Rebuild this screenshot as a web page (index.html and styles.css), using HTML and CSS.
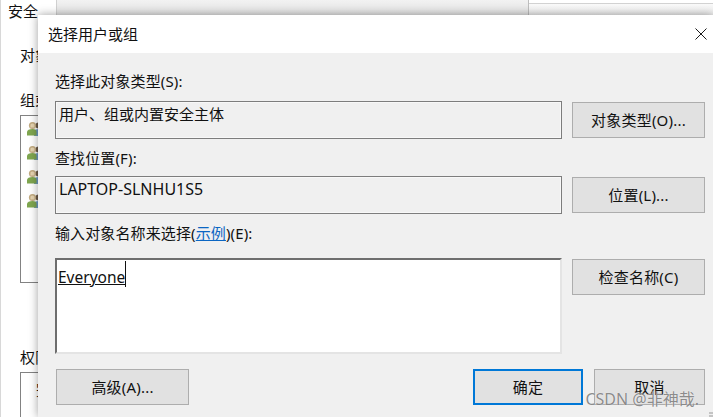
FILE: index.html
```html
<!DOCTYPE html>
<html lang="zh-CN">
<head>
    <meta charset="UTF-8">
    <meta name="viewport" content="width=device-width, initial-scale=1.0">
    <title>选择用户或组</title>
    <link rel="stylesheet" href="styles.css">
</head>
<body>
    <svg class="defs" width="0" height="0">
        <symbol id="users" viewBox="0 0 16 16">
            <circle cx="11.500" cy="4.500" r="3" fill="#6b5a48"/>
            <path d="M7 15v-4c0-2 2-3 4.500-3s4 1 4 3v4z" fill="#6f9ac6"/>
            <circle cx="5.500" cy="4.500" r="3.600" fill="#c2ab80"/>
            <path d="M3.500 3.500c1-1.500 3-1.500 4 0v3h-4z" fill="#e6d4b0"/>
            <path d="M0 14.500v-3.500c0-2 2.500-3 5.500-3s4 1 4 3v3.500z" fill="#7fa64f"/>
        </symbol>
    </svg>

    <!-- window behind the dialog -->
    <div class="back-window">
        <div class="back-tabs">
            <div class="back-tab">安全</div>
            <div class="back-tab-rest"></div>
            <div class="back-tab-end"></div>
        </div>
        <div class="back-body">
            <p class="back-label back-label-object">对象</p>
            <p class="back-label back-label-group">组或</p>
            <div class="back-list">
                <svg class="back-icon"><use href="#users"/></svg>
                <svg class="back-icon"><use href="#users"/></svg>
                <svg class="back-icon"><use href="#users"/></svg>
                <svg class="back-icon"><use href="#users"/></svg>
            </div>
            <p class="back-label back-label-perm">权限</p>
            <div class="back-perm">
                <span class="back-perm-text">完</span>
            </div>
        </div>
    </div>

    <div class="dialog">
        <div class="title-bar">
            <span class="title-text">选择用户或组</span>
            <svg class="close-icon" width="12" height="12" viewBox="0 0 12 12">
                <path d="M0.500 0.500L11.500 11.500M11.500 0.500L0.500 11.500" stroke="#1a1a1a" stroke-width="1" fill="none"/>
            </svg>
        </div>
        <div class="dialog-body">
            <label class="field-label label-type">选择此对象类型(S):</label>
            <div class="row">
                <div class="readonly-field">用户、组或内置安全主体</div>
                <button class="btn btn-side">对象类型(O)...</button>
            </div>

            <label class="field-label label-place">查找位置(F):</label>
            <div class="row">
                <div class="readonly-field field-latin">LAPTOP-SLNHU1S5</div>
                <button class="btn btn-side">位置(L)...</button>
            </div>

            <label class="field-label label-name">输入对象名称来选择(<a class="sample-link" href="#">示例</a>)(E):</label>
            <div class="row row-top">
                <div class="name-input"><span class="name-text">Everyone</span></div>
                <button class="btn btn-side">检查名称(C)</button>
            </div>

            <div class="footer">
                <button class="btn btn-advanced">高级(A)...</button>
                <div class="footer-right">
                    <button class="btn btn-ok">确定</button>
                    <button class="btn btn-cancel">取消</button>
                </div>
            </div>
        </div>
        <div class="grip"></div>
    </div>

    <div class="watermark">CSDN @非神哉.</div>
</body>
</html>
```

FILE: styles.css
```css
html, body {
    margin: 0;
    padding: 0;
    width: 713px;
    height: 417px;
    overflow: hidden;
}

body {
    font-family: "Noto Sans", "Noto Sans CJK SC", sans-serif;
    font-size: 15px;
    color: #111;
    background: #fff;
    position: relative;
}

.defs {
    position: absolute;
}

p {
    margin: 0;
}

/* back window */
.back-window {
    position: absolute;
    left: 0;
    top: 0;
    width: 713px;
    height: 417px;
    background: #fff;
    border-left: 1px solid #d8d8d8;
    box-sizing: border-box;
    overflow: hidden;
}

.back-tabs {
    display: flex;
    height: 15px;
}

.back-tab {
    width: 56px;
    padding-left: 7px;
    box-sizing: border-box;
    line-height: 22px;
    height: 22px;
    border-right: 1px solid #d0d0d0;
    background: #fff;
}

.back-tab-rest {
    width: 471px;
    background: linear-gradient(#f2f2f2, #e2e2e2);
    border-right: 1px solid #bdbdbd;
}

.back-tab-end {
    flex: 1;
    margin-top: 3px;
    border-top: 1px solid #d2d2d2;
    background: linear-gradient(#fafafa, #ececec);
}

.back-body {
    padding: 30px 0 0 19px;
}

.back-label {
    line-height: 20px;
    white-space: nowrap;
}

.back-label-group {
    margin-top: 25px;
}

.back-list {
    display: flex;
    flex-direction: column;
    gap: 8px;
    width: 300px;
    height: 168px;
    margin-top: 5px;
    padding: 5px 0 0 6px;
    box-sizing: border-box;
    border: 1px solid #828282;
}

.back-icon {
    width: 16px;
    height: 16px;
    flex: none;
}

.back-label-perm {
    margin-top: 64px;
}

.back-perm {
    width: 300px;
    height: 60px;
    margin-top: 5px;
    padding: 5px 0 0 15px;
    box-sizing: border-box;
    border: 1px solid #828282;
    white-space: nowrap;
}

/* dialog */
.dialog {
    position: absolute;
    left: 38px;
    top: 15px;
    width: 675px;
    height: 402px;
    background: #f0f0f0;
    box-shadow: 0 0 9px rgba(0, 0, 0, 0.38);
}

.title-bar {
    height: 38px;
    background: #fff;
    display: flex;
    align-items: center;
    justify-content: space-between;
    padding: 0 6px 0 10px;
}

.title-text {
    line-height: 38px;
}

.dialog-body {
    padding: 18px 8px 0 17px;
}

.field-label {
    display: block;
    line-height: 20px;
    letter-spacing: 0.12px;
}

.label-type {
    margin-bottom: 10px;
}

.label-place {
    margin: 9px 0 8px;
}

.label-name {
    margin: 9px 0 15px;
}

.sample-link {
    color: #0b66c3;
}

.row {
    display: flex;
    align-items: center;
    gap: 10px;
}

.row-top {
    align-items: flex-start;
}

.readonly-field {
    width: 507px;
    height: 38px;
    box-sizing: border-box;
    padding: 1px 0 0 3px;
    line-height: 22px;
    border: 1px solid #7d7d7d;
    box-shadow: inset 0 0 0 1px #f8f8f8;
    background: #f0f0f0;
}

.field-latin {
    font-size: 16px;
}

.name-input {
    width: 507px;
    height: 96px;
    box-sizing: border-box;
    padding: 1px 0 0 1px;
    background: #fff;
    border-style: solid;
    border-width: 2px;
    border-color: #6e6e6e #e4e4e4 #e4e4e4 #6e6e6e;
}

.name-text {
    display: inline-block;
    height: 26px;
    font-size: 15.5px;
    line-height: 33px;
    text-decoration: underline;
    text-decoration-thickness: 1px;
    text-underline-offset: 1px;
    border-right: 1px solid #111;
}

.btn {
    font: inherit;
    letter-spacing: 0.2px;
    color: #111;
    background: #e1e1e1;
    border: 1px solid #adadad;
    padding: 0 0 2px;
    box-sizing: border-box;
    height: 36px;
}

.btn-side {
    width: 133px;
}

.row-top .btn-side {
    margin-top: 1px;
}

.footer {
    display: flex;
    justify-content: space-between;
    margin-top: 15px;
    padding-left: 1px;
}

.footer-right {
    display: flex;
    gap: 11px;
}

.btn-advanced {
    width: 133px;
}

.btn-ok {
    width: 110px;
    border: 2px solid #0078d7;
}

.btn-cancel {
    width: 111px;
}

.grip {
    position: absolute;
    right: 0;
    bottom: 0;
    width: 4px;
    height: 5px;
    background: repeating-linear-gradient(#c4c4c4 0 2px, transparent 2px 3px);
}

.watermark {
    position: absolute;
    right: 14px;
    top: 389px;
    font-size: 16px;
    line-height: 20px;
    color: rgba(110, 110, 110, 0.8);
    text-shadow: 0 0 1px rgba(255, 255, 255, 0.9);
    white-space: nowrap;
}
```
